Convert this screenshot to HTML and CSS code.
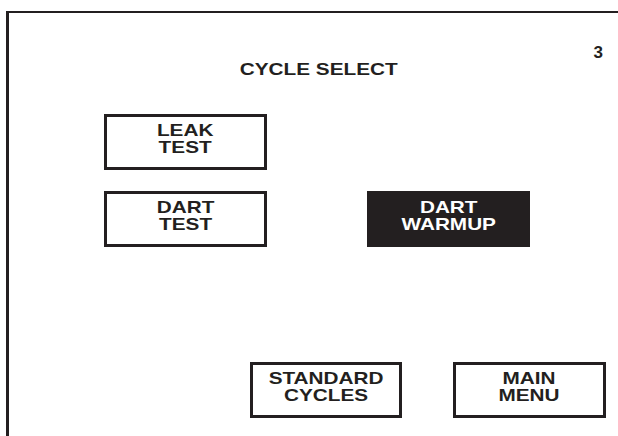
FILE: index.html
```html
<!DOCTYPE html>
<html lang="en">
<head>
<meta charset="utf-8" />
<title>Cycle Select</title>
<link rel="stylesheet" href="styles.css">
</head>
<body>
<div class="screen">
    <div class="page-num">3</div>
    <h1 class="title"><span class="wide">CYCLE SELECT</span></h1>

    <div class="cycles">
        <div class="btn"><span class="wide">LEAK<br>TEST</span></div>
        <div></div>
        <div class="btn"><span class="wide">DART<br>TEST</span></div>
        <div class="btn active"><span class="wide">DART<br>WARMUP</span></div>
    </div>

    <div class="nav">
        <div class="btn small"><span class="wide">STANDARD<br>CYCLES</span></div>
        <div class="btn small"><span class="wide">MAIN<br>MENU</span></div>
    </div>
</div>
</body>
</html>
```

FILE: styles.css
```css
html, body {
    margin: 0;
    padding: 0;
    background: #fff;
    overflow: hidden;
}
body {
    font-family: "Liberation Sans", Arial, sans-serif;
    font-weight: bold;
    color: #231f20;
}

/* the panel font is a stretched helvetica */
.wide {
    display: inline-block;
    transform: scaleX(1.22);
}

/* outer frame: only top and left edges show */
.screen {
    box-sizing: border-box;
    height: calc(100vh - 11px);
    margin: 11px 0 0 6px;
    padding-top: 32px;
    border-top: 2px solid #231f20;
    border-left: 3px solid #231f20;
}

.page-num {
    text-align: right;
    padding-right: 15px;
    font-size: 17px;
    line-height: 16px;
}
.title {
    box-sizing: border-box;
    width: 100%;
    margin: 0;
    padding-left: 10px;
    text-align: center;
    font-size: 17px;
    line-height: 17px;
}

.cycles {
    display: grid;
    grid-template-columns: 163px 163px;
    grid-auto-rows: 56px;
    column-gap: 100px;
    row-gap: 21px;
    margin-top: 36px;
    padding-left: 95px;
}
.nav {
    display: flex;
    gap: 51px;
    margin-top: 115px;
    padding-left: 241px;
}

.btn {
    box-sizing: border-box;
    display: flex;
    align-items: center;
    justify-content: center;
    padding-bottom: 6px;
    text-align: center;
    border: 3px solid #231f20;
    font-size: 17px;
    line-height: 17px;
}
.btn.small {
    width: 152px;
    height: 56px;
}
.btn.small + .btn.small {
    width: 153px;
}
.btn.active {
    background: #231f20;
    color: #fff;
}
```
